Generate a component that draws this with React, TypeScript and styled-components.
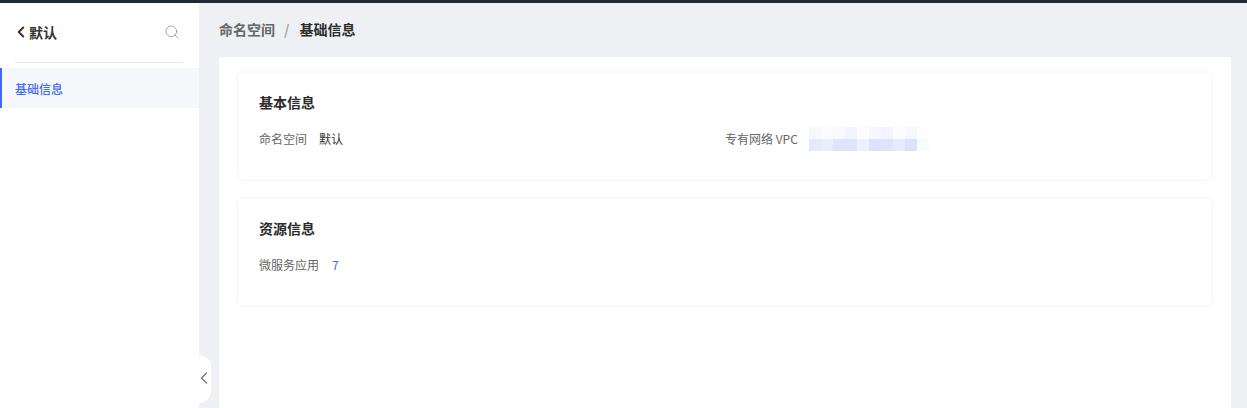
import * as React from "react"
import styled, { createGlobalStyle } from "styled-components"
import { ChevronLeft, Search } from "lucide-react"

const color = {
  topBar: "#23273a",
  pageBg: "#eff0f4",
  blue: "#3f6cf6",
  text: "#2b2b2b",
  label: "#666",
  activeBg: "#f6f7fa",
}

const GlobalStyle = createGlobalStyle`
  html, body {
    margin: 0;
    height: 100%;
    overflow: hidden;
  }
  body {
    font-family: "Noto Sans CJK SC", "Liberation Sans", sans-serif;
    font-size: 12px;
    color: ${color.text};
  }
  #root {
    height: 100%;
  }
  * {
    box-sizing: border-box;
  }
`

const Page = styled.div`
  display: flex;
  flex-direction: column;
  height: 408px;
  width: 1247px;
  overflow: hidden;
`

const TopBar = styled.div`
  height: 3px;
  flex-shrink: 0;
  background-color: ${color.topBar};
`

const Body = styled.div`
  display: flex;
  flex: 1;
  min-height: 0;
  position: relative;
`

const Side = styled.aside`
  width: 199px;
  flex-shrink: 0;
  background-color: #fff;
`

const SideHeader = styled.div`
  display: flex;
  align-items: center;
  justify-content: space-between;
  height: 60px;
  width: 168px;
  margin: 0 16px 0 15px;
  padding: 0 3px 2px 0;
  border-bottom: 1px solid #e3e4ee;
`

const BackTitle = styled.div`
  display: flex;
  align-items: center;
  font-size: 14px;
  font-weight: 700;
  line-height: 20px;
  color: #333;
`

const BackIcon = styled(ChevronLeft)`
  width: 18px;
  height: 18px;
  margin-left: -3px;
  margin-right: -1px;
  color: #333;
`

const SearchIcon = styled(Search)`
  width: 16px;
  height: 16px;
  margin-top: 1px;
  color: #999;
`

const SideItem = styled.div<{ $active?: boolean }>`
  display: flex;
  align-items: center;
  height: 40px;
  margin-top: 5px;
  padding-left: 13px;
  font-size: 12px;
  font-weight: 500;
  color: ${(p) => (p.$active ? color.blue : color.text)};
  background-color: ${(p) => (p.$active ? color.activeBg : "transparent")};
  border-left: 2px solid ${(p) => (p.$active ? color.blue : "transparent")};
`

const CollapseHandle = styled.div`
  position: absolute;
  left: 199px;
  top: 352px;
  width: 12px;
  height: 48px;
  display: flex;
  align-items: center;
  justify-content: center;
  padding: 0 2px 2px 0;
  background-color: #fff;
  border-radius: 0 12px 12px 0;
  color: #6f7890;
`

const CollapseIcon = styled(ChevronLeft)`
  flex-shrink: 0;
  width: 20px;
  height: 20px;
`

const Main = styled.main`
  flex: 1;
  min-width: 0;
  padding: 0 16px 0 20px;
  background-color: ${color.pageBg};
`

const Breadcrumb = styled.div`
  display: flex;
  align-items: center;
  height: 54px;
  font-size: 14px;
  font-weight: 700;
  padding-bottom: 3px;
`

const Crumb = styled.span<{ $current?: boolean }>`
  color: ${(p) => (p.$current ? color.text : "#666")};
`

const CrumbSep = styled.span`
  margin: 0 10px 0 9px;
  color: #a6a6a6;
  font-weight: 700;
`

const Content = styled.div`
  height: 400px;
  padding: 16px 20px;
  background-color: #fff;
  border-radius: 2px;
`

const Card = styled.section`
  height: 106px;
  padding: 20px;
  margin-bottom: 20px;
  background-color: #fff;
  border-radius: 4px;
  box-shadow: 0 0 6px rgba(40, 45, 70, 0.07);
`

const CardTitle = styled.h3`
  margin: -1px 0 18px;
  font-size: 14px;
  font-weight: 700;
  line-height: 20px;
  color: ${color.text};
`

const Fields = styled.div`
  display: grid;
  grid-template-columns: 466px 1fr;
  align-items: center;
`

const Field = styled.div`
  display: flex;
  align-items: center;
  height: 18px;
  line-height: 18px;
`

const Label = styled.span`
  margin-right: 12px;
  color: ${color.label};
`

const Value = styled.span`
  color: #333;
`

const CountLink = styled.span`
  margin-left: 1px;
  color: ${color.blue};
`

const Mosaic = styled.div`
  display: grid;
  grid-template-columns: repeat(10, 12px);
  grid-auto-rows: 12px;
  margin-left: -1px;
`

const MosaicCell = styled.i<{ $tone: string }>`
  display: block;
  background-color: ${(p) => p.$tone};
`

const mosaicTones = [
  "#f7f8fe", "#fbfbff", "#f9faff", "#f3f5fe", "#fdfdff", "#f6f7fe", "#f2f4fe", "#fbfcff", "#f7f8fe", "#fefeff",
  "#e5e9fb", "#e9edfc", "#dfe4fb", "#e0e5fb", "#eef1fd", "#dee3fb", "#dfe4fb", "#e7eafc", "#dde2fa", "#fafbff",
]

export default function App() {
  return (
    <Page>
      <GlobalStyle />
      <TopBar />
      <Body>
        <Side>
          <SideHeader>
            <BackTitle>
              <BackIcon strokeWidth={2.6} />
              默认
            </BackTitle>
            <SearchIcon strokeWidth={1.3} />
          </SideHeader>
          <SideItem $active>基础信息</SideItem>
        </Side>
        <CollapseHandle>
          <CollapseIcon strokeWidth={1.6} />
        </CollapseHandle>
        <Main>
          <Breadcrumb>
            <Crumb>命名空间</Crumb>
            <CrumbSep>/</CrumbSep>
            <Crumb $current>基础信息</Crumb>
          </Breadcrumb>
          <Content>
            <Card>
              <CardTitle>基本信息</CardTitle>
              <Fields>
                <Field>
                  <Label>命名空间</Label>
                  <Value>默认</Value>
                </Field>
                <Field>
                  <Label>专有网络 VPC</Label>
                  <Mosaic>
                    {mosaicTones.map((tone, i) => (
                      <MosaicCell key={i} $tone={tone} />
                    ))}
                  </Mosaic>
                </Field>
              </Fields>
            </Card>
            <Card>
              <CardTitle>资源信息</CardTitle>
              <Field>
                <Label>微服务应用</Label>
                <CountLink>7</CountLink>
              </Field>
            </Card>
          </Content>
        </Main>
      </Body>
    </Page>
  )
}
